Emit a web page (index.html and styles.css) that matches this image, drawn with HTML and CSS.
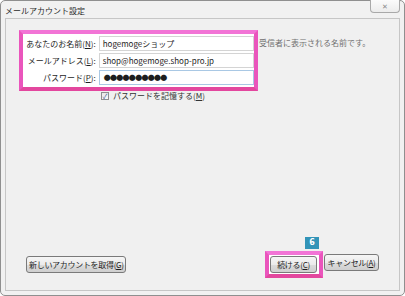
FILE: index.html
```html
<!DOCTYPE html>
<html lang="ja">
<head>
    <meta charset="UTF-8">
    <title>メールアカウント設定</title>
    <link rel="stylesheet" href="styles.css">
</head>
<body>
    <div class="window">
        <div class="titlebar">
            <span class="title">メールアカウント設定</span>
            <span class="close-btn">✕</span>
        </div>

        <div class="panel">
            <div class="form-area">
                <div class="highlight">
                    <div class="field-row">
                        <label class="field-label">あなたのお名前(<u>N</u>):</label>
                        <div class="field-input">hogemogeショップ</div>
                    </div>
                    <div class="field-row">
                        <label class="field-label">メールアドレス(<u>L</u>):</label>
                        <div class="field-input">shop@hogemoge.shop-pro.jp</div>
                    </div>
                    <div class="field-row">
                        <label class="field-label">パスワード(<u>P</u>):</label>
                        <div class="field-input focused dots">●●●●●●●●●●</div>
                    </div>
                </div>
                <div class="hint">受信者に表示される名前です。</div>
            </div>

            <div class="check-row">
                <span class="checkbox">✓</span>
                <span>パスワードを記憶する(<u>M</u>)</span>
            </div>

            <div class="footer">
                <button class="btn btn-wide">新しいアカウントを取得(<u>G</u>)</button>
                <div class="footer-right">
                    <div class="btn-highlight">
                        <span class="badge">6</span>
                        <button class="btn">続ける(<u>C</u>)</button>
                    </div>
                    <button class="btn btn-cancel">キャンセル(<u>A</u>)</button>
                </div>
            </div>
        </div>
    </div>
</body>
</html>
```

FILE: styles.css
```css
body {
    margin: 0;
    padding: 0;
    background: #ffffff;
    font-family: "Noto Sans CJK JP", "DejaVu Sans", sans-serif;
    font-size: 8px;
    color: #1e1e1e;
}
u {
    text-decoration: underline;
}
.window {
    box-sizing: border-box;
    width: 405px;
    height: 296px;
    border: 1px solid #8f8f8f;
    border-radius: 5px;
    background: #f1f1f1;
    display: flex;
    flex-direction: column;
    padding: 0 4px 4px 4px;
}
.titlebar {
    height: 17px;
    display: flex;
    justify-content: space-between;
    align-items: flex-start;
}
.title {
    padding: 4px 0 0 0;
    line-height: 12px;
    color: #2a2a2a;
}
.close-btn {
    box-sizing: border-box;
    width: 30px;
    height: 13px;
    margin-top: -1px;
    border: 1px solid #a9a9a9;
    border-top: none;
    border-radius: 0 0 4px 4px;
    background: linear-gradient(#fbfbfb, #ececec);
    color: #8a8a8a;
    font-size: 7px;
    line-height: 12px;
    text-align: center;
}
.panel {
    flex: 1;
    border: 1px solid #c6c6c6;
    background: #f0f0f0;
    display: flex;
    flex-direction: column;
    padding: 11px 20px 17px 13px;
}
.form-area {
    display: flex;
    align-items: flex-start;
}
.highlight {
    box-sizing: border-box;
    width: 239px;
    height: 61px;
    border: 4px solid #ea55bc;
    border-top-color: #f274d6;
    border-bottom-color: #e3479e;
    background: #ffffff;
    padding: 2px 0 0 0;
    display: flex;
    flex-direction: column;
    gap: 2px;
}
.field-row {
    display: flex;
    align-items: center;
}
.field-label {
    width: 73px;
    text-align: right;
    padding-right: 3px;
    white-space: nowrap;
}
.field-input {
    box-sizing: border-box;
    width: 156px;
    height: 15px;
    border: 1px solid #d4d4d4;
    background: #ffffff;
    padding: 0 3px;
    line-height: 13px;
    white-space: nowrap;
    overflow: hidden;
}
.field-input.focused {
    border-color: #a9c8e4;
}
.dots {
    font-size: 7px;
    letter-spacing: -0.7px;
    padding-left: 4px;
}
.hint {
    margin: 7px 0 0 1px;
    color: #707070;
    white-space: nowrap;
}
.check-row {
    display: flex;
    align-items: center;
    gap: 4px;
    margin: 0 0 0 82px;
    color: #333333;
    line-height: 9px;
}
.checkbox {
    box-sizing: border-box;
    width: 8px;
    height: 8px;
    border: 1px solid #8e8f8f;
    background: linear-gradient(#e8e8e8, #fafafa);
    color: #4a5f97;
    font-size: 7px;
    line-height: 6px;
    text-align: center;
}
.footer {
    margin-top: auto;
    display: flex;
    justify-content: space-between;
    align-items: flex-end;
    padding-left: 7px;
}
.footer-right {
    display: flex;
    align-items: center;
    gap: 1px;
}
.btn {
    box-sizing: border-box;
    height: 17px;
    padding: 0 2px;
    border: 1px solid #7a7a7a;
    border-radius: 3px;
    background: linear-gradient(#f6f6f6 0%, #ebebeb 50%, #dcdcdc 51%, #cfcfcf 100%);
    font-family: inherit;
    font-size: 8px;
    letter-spacing: -0.3px;
    color: #1e1e1e;
    line-height: 15px;
    white-space: nowrap;
    text-align: center;
}
.btn-wide {
    width: 100px;
}
.btn-cancel {
    width: 55px;
}
.btn-highlight {
    position: relative;
    box-sizing: border-box;
    height: 27px;
    width: 58px;
    border: 4px solid #ea55bc;
    border-top-color: #f274d6;
    border-bottom-color: #e3479e;
    background: #ffffff;
    padding: 1px 2px 0 1px;
    margin-bottom: -5px;
}
.btn-highlight .btn {
    width: 47px;
}
.badge {
    position: absolute;
    right: 0;
    top: -18px;
    width: 14px;
    height: 12px;
    background: #3294b8;
    color: #ffffff;
    font-family: "DejaVu Sans", sans-serif;
    font-weight: bold;
    font-size: 8px;
    line-height: 12px;
    text-align: center;
}
```
